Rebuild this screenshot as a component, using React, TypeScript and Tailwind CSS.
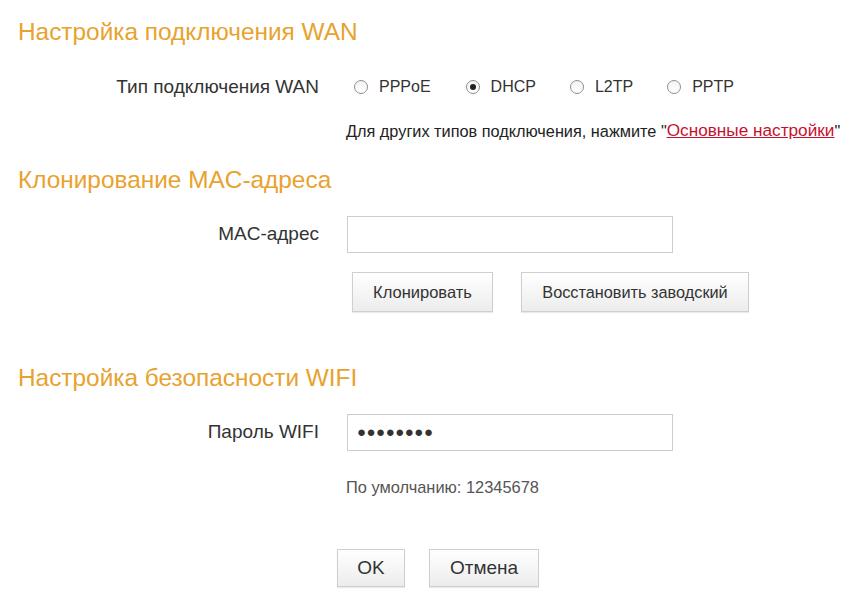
import React from "react";

const font = { fontFamily: '"Liberation Sans", Arial, sans-serif' };

function Radio({ label, checked }: { label: string; checked?: boolean }) {
  return (
    <div className="flex items-center">
      <span className="flex h-[14px] w-[14px] items-center justify-center rounded-full border border-[#8f8f8f] bg-gradient-to-b from-[#f4f4f4] to-[#ffffff]">
        {checked && <span className="h-[6px] w-[6px] rounded-full bg-[#222]" />}
      </span>
      <span className="ml-[11px] text-[16px] text-[#333]">{label}</span>
    </div>
  );
}

function Btn({ children, w, h = 40, size }: { children: React.ReactNode; w: string; h?: number; size: string }) {
  return (
    <button
      className={`${w} ${size} flex items-center justify-center border border-[#cfcfcf] bg-gradient-to-b from-[#ffffff] to-[#ececec] text-[#333] shadow-[0_1px_1px_rgba(0,0,0,0.08)]`}
      style={{ height: h }}
    >
      {children}
    </button>
  );
}

function Heading({ children, mt }: { children: React.ReactNode; mt: string }) {
  return (
    <div className={`${mt} flex h-[28px] items-center whitespace-nowrap pl-[18px] text-[24.4px] text-[#e8a22e]`}>{children}</div>
  );
}

export default function App() {
  return (
    <div className="h-[613px] w-[841px] overflow-hidden bg-white" style={font}>
      <Heading mt="mt-[18px]">Настройка подключения WAN</Heading>

      <div className="mt-[26px] flex h-[30px] items-center">
        <div className="w-[320px] pr-[1px] text-right text-[19px] text-[#333]">Тип подключения WAN</div>
        <div className="ml-[34px] flex items-center">
          <Radio label="PPPoE" />
          <div className="ml-[35px]"><Radio label="DHCP" checked /></div>
          <div className="ml-[34px]"><Radio label="L2TP" /></div>
          <div className="ml-[34px]"><Radio label="PPTP" /></div>
        </div>
      </div>

      <div className="mt-[18px] flex h-[22px] items-center whitespace-nowrap pl-[346px] text-[16.3px] text-[#222]">
        Для других типов подключения, нажмите "
        <span className="text-[17.2px] text-[#c8102e] underline">Основные настройки</span>"
      </div>

      <Heading mt="mt-[24px]">Клонирование MAC-адреса</Heading>

      <div className="mt-[22px] flex h-[37px] items-center">
        <div className="w-[320px] pr-[1px] text-right text-[19px] text-[#333]">MAC-адрес</div>
        <div className="ml-[27px] h-[37px] w-[326px] border border-[#cdcdcd] bg-white" />
      </div>

      <div className="mt-[19px] flex h-[40px] items-center pl-[352px]">
        <Btn w="w-[141px]" size="text-[16.5px]">Клонировать</Btn>
        <div className="ml-[28px]">
          <Btn w="w-[228px]" size="text-[16.3px]">Восстановить заводский</Btn>
        </div>
      </div>

      <Heading mt="mt-[52px]">Настройка безопасности WIFI</Heading>

      <div className="mt-[22px] flex h-[37px] items-center">
        <div className="w-[320px] pr-[1px] text-right text-[19px] text-[#333]">Пароль WIFI</div>
        <div className="ml-[27px] flex h-[37px] w-[326px] items-center border border-[#cdcdcd] bg-white pl-[9px] text-[15px] tracking-[0.5px] text-[#333]">
          ●●●●●●●●
        </div>
      </div>

      <div className="mt-[25px] flex h-[22px] items-center pl-[346px] text-[16.4px] text-[#555]">
        По умолчанию: 12345678
      </div>

      <div className="mt-[51px] flex items-center pl-[337px]">
        <Btn w="w-[68px]" h={38} size="text-[19px]">OK</Btn>
        <div className="ml-[24px]">
          <Btn w="w-[110px]" h={38} size="text-[19px]">Отмена</Btn>
        </div>
      </div>
    </div>
  );
}
